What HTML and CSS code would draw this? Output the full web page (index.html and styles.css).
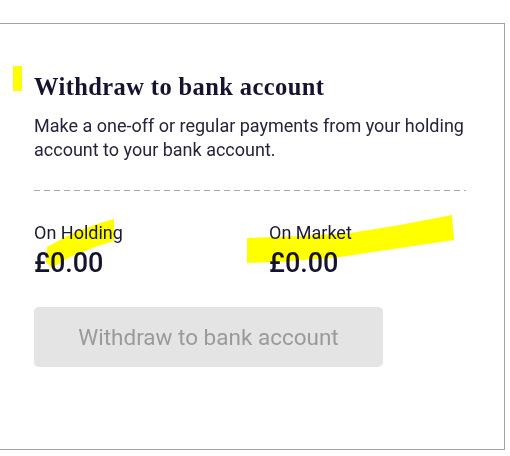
FILE: index.html
```html
<!DOCTYPE html>
<html lang="en">
<head>
  <meta charset="UTF-8">
  <title>Withdraw to bank account</title>
  <link rel="stylesheet" href="styles.css">
</head>
<body>
  <div class="card">
    <h2 class="title">Withdraw to bank account</h2>
    <p class="intro">Make a one-off or regular payments from your holding account to your bank account.</p>

    <div class="divider"></div>

    <div class="balances">
      <div class="balance">
        <span class="label">On Holding</span>
        <span class="amount">£0.00</span>
      </div>
      <div class="balance">
        <span class="label">On Market</span>
        <span class="amount">£0.00</span>
      </div>
    </div>

    <button class="withdraw-btn" disabled>Withdraw to bank account</button>
  </div>

  <!-- highlighter marks drawn over the screenshot -->
  <svg class="marks" viewBox="0 0 510 456" width="510" height="456">
    <rect x="13" y="66" width="9" height="25" fill="#ffff00"/>
    <polygon fill="#ffff00" points="47,247 75,232 100,223 114,219 114,241 95,247 70,257 52,268 46,262"/>
    <polygon fill="#ffff00" points="247,238 300,236 350,233 400,225 452,215 454,240 400,248 340,257 280,262 247,263"/>
  </svg>
</body>
</html>
```

FILE: styles.css
```css
body {
  margin: 0;
  font-family: Roboto, "Liberation Sans", sans-serif;
  color: #1c1a33;
  background: #fff;
}
.card {
  margin: 23px 5px 6px -1px;
  height: 427px;
  box-sizing: border-box;
  border: 1px solid #a3a3a3;
  padding: 49px 38px 0 34px;
}
.title {
  margin: 0 0 13px;
  font-family: "Liberation Serif", serif;
  font-weight: bold;
  font-size: 24.5px;
  line-height: 28px;
  letter-spacing: 0.4px;
  color: #16132e;
}
.intro {
  margin: 0;
  font-size: 18px;
  line-height: 24px;
  color: #26243a;
}
.divider {
  margin: 28px 0 31px;
  height: 1px;
  background: linear-gradient(to right, #a8a8a8 6px, transparent 6px) 0 0 / 10px 1px repeat-x;
}
.balances {
  display: grid;
  grid-template-columns: 235px 1fr;
}
.balance {
  display: flex;
  flex-direction: column;
  gap: 4px;
}
.label {
  font-size: 18px;
  line-height: 22px;
}
.amount {
  font-size: 27px;
  font-weight: 500;
  line-height: 30px;
  color: #16132e;
}
.withdraw-btn {
  margin-top: 29px;
  width: 349px;
  height: 60px;
  border: 0;
  border-radius: 5px;
  background-color: #e4e4e4;
  color: #9a9a9a;
  font-family: Roboto, "Liberation Sans", sans-serif;
  font-size: 22.5px;
}
.marks {
  position: absolute;
  top: 0;
  left: 0;
  pointer-events: none;
  mix-blend-mode: multiply;
}
```
